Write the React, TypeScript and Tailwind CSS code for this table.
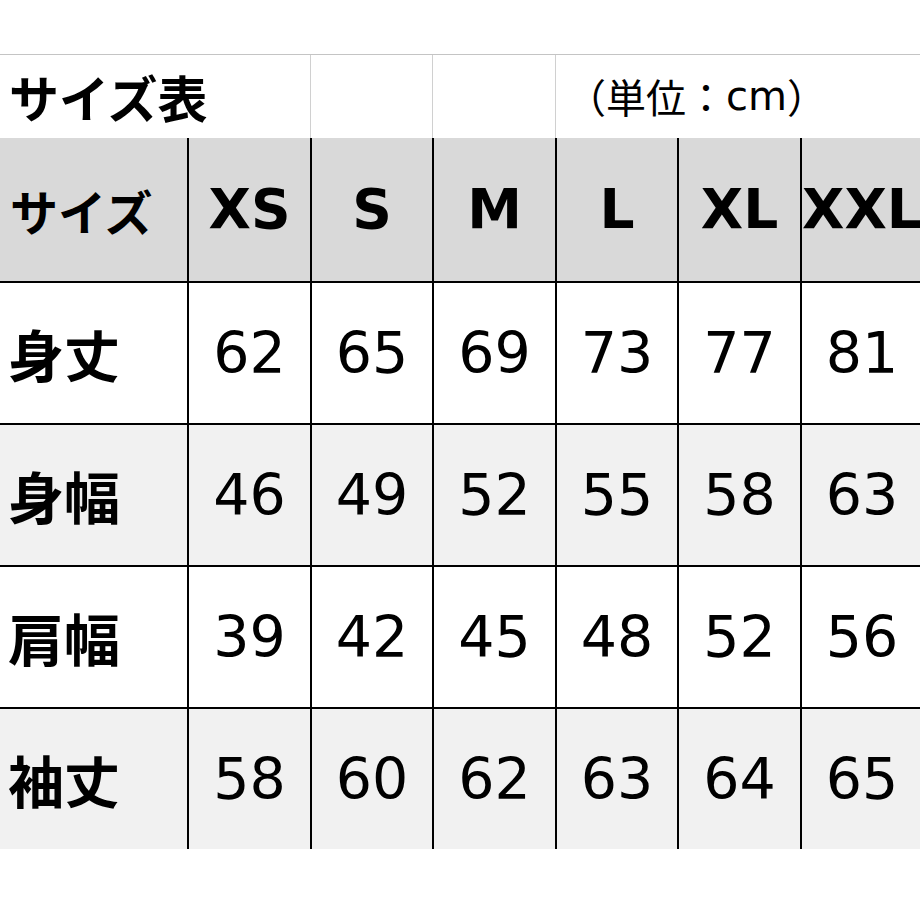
import React from "react";

// サイズ表 (cm)
const sizes = ["XS", "S", "M", "L", "XL", "XXL"];

const rows: { label: string; values: number[]; shaded: boolean }[] = [
  { label: "身丈", values: [62, 65, 69, 73, 77, 81], shaded: false },
  { label: "身幅", values: [46, 49, 52, 55, 58, 63], shaded: true },
  { label: "肩幅", values: [39, 42, 45, 48, 52, 56], shaded: false },
  { label: "袖丈", values: [58, 60, 62, 63, 64, 65], shaded: true },
];

const cols =
  "grid grid-cols-[187px_123px_122px_123px_122px_123px_122px] w-[922px]";

const jp = "font-['Noto_Sans_CJK_JP','Noto_Sans',sans-serif]";
const latin = "font-['DejaVu_Sans','Noto_Sans_CJK_JP',sans-serif]";

export default function App() {
  return (
    <div className="w-[920px] h-[920px] overflow-hidden bg-white pt-[54px] text-black">
      <div className="w-[922px] border-t border-[#c4c4c4]">
        {/* Title row */}
        <div className={`${cols} h-[83px]`}>
          <div className={`col-span-2 flex items-center pl-[9px] pb-[2px] text-[50px] font-bold leading-none ${jp}`}>
            サイズ表
          </div>
          <div className="border-l border-[#d0d0d0]" />
          <div className="border-l border-[#d0d0d0]" />
          <div className={`col-span-3 flex items-center border-l border-[#d0d0d0] pl-[10px] pb-[2px] text-[40px] leading-none ${jp}`}>
            <span>（単位：</span>
            <span className={latin}>cm</span>
            <span>）</span>
          </div>
        </div>

        {/* Header row */}
        <div className={`${cols} h-[143px] bg-[#d9d9d9]`}>
          <div className={`flex items-center pl-[10px] text-[48px] font-bold leading-none ${jp}`}>
            サイズ
          </div>
          {sizes.map((s) => (
            <div
              key={s}
              className={`flex items-center justify-center overflow-visible whitespace-nowrap border-l-2 border-black text-[55px] font-bold leading-none ${latin}`}
            >
              {s}
            </div>
          ))}
        </div>

        {/* Data rows */}
        {rows.map((r) => (
          <div
            key={r.label}
            className={`${cols} h-[142px] border-t-2 border-black ${
              r.shaded ? "bg-[#f1f1f1]" : "bg-white"
            }`}
          >
            <div className={`flex items-center pl-[8px] text-[56px] font-bold leading-none ${jp}`}>
              {r.label}
            </div>
            {r.values.map((v, i) => (
              <div
                key={i}
                className={`flex items-center justify-center border-l-2 border-black text-[57px] leading-none ${latin}`}
              >
                {v}
              </div>
            ))}
          </div>
        ))}
      </div>
    </div>
  );
}
